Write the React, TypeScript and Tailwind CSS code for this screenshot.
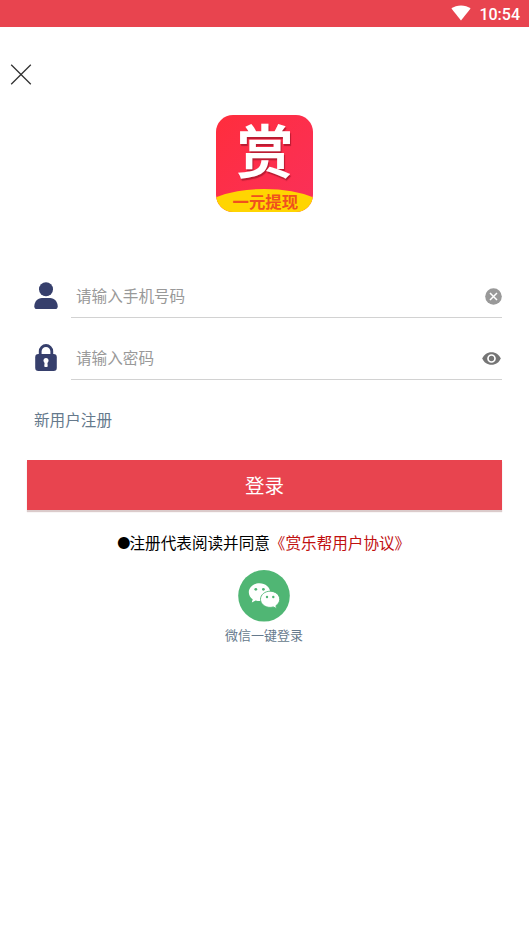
import { useState } from 'react'

function StatusBar() {
  return (
    <div className="flex h-[27px] items-center justify-end bg-[#E8444F] pr-[9px] text-white">
      <svg width="20" height="16" viewBox="0 0 20 16" className="-mt-[2px] mr-[8px]" fill="currentColor">
        <path d="M10 15.500 0.400 3.600C3 1.500 6.300.4 10 .4s7 1.100 9.600 3.200z" />
      </svg>
      <span className="mt-[2px] font-['Roboto',sans-serif] text-[16px] font-medium leading-[20px]">10:54</span>
    </div>
  )
}

function AppLogo() {
  return (
    <div className="relative mx-auto h-[97px] w-[97px]">
      <div className="h-full overflow-hidden rounded-[17px] bg-gradient-to-br from-[#FF2D3C] to-[#FA3059]">
        <div className="-ml-[22px] mt-[74px] h-[60px] w-[141px] rounded-[50%] bg-[#FFD501]" />
      </div>
      <span className="absolute left-[21px] top-[8px] text-[57px] font-bold leading-[57px] text-white [text-shadow:1px_2px_1px_#b81c32] -translate-y-[3px]">赏</span>
      <span className="absolute left-[17px] top-[77px] whitespace-nowrap text-[16.4px] font-bold leading-[18px] text-[#F0501E]">一元提现</span>
    </div>
  )
}

function UserIcon() {
  return (
    <svg width="24" height="28" viewBox="0 0 24 28" fill="#363F6C">
      <circle cx="12" cy="7.200" r="7" />
      <path d="M.3 24.400C.3 19.800 3.400 16 8 16h8c4.600 0 7.700 3.800 7.700 8.400 0 1.700-1 2.600-2.600 2.600H2.900C1.300 27 .3 26.100.3 24.400z" />
    </svg>
  )
}

function LockIcon() {
  return (
    <svg width="24" height="28" viewBox="0 0 24 28">
      <path d="M6.200 12V7.300a5.800 5.800 0 0 1 11.600 0V12" fill="none" stroke="#363F6C" strokeWidth="2.800" />
      <rect x="1.200" y="10" width="21.600" height="17" rx="3.200" fill="#363F6C" />
      <circle cx="12" cy="16.500" r="2.500" fill="#fff" />
      <path d="M11.200 17h1.600l.4 5.500h-2.400z" fill="#fff" stroke="#fff" strokeLinejoin="round" />
    </svg>
  )
}

function ClearIcon() {
  return (
    <svg width="17" height="17" viewBox="0 0 17 17">
      <circle cx="8.500" cy="8.500" r="8.300" fill="#999" />
      <path d="M5 5l7 7M12 5l-7 7" stroke="#fff" strokeWidth="1.500" />
    </svg>
  )
}

function EyeIcon() {
  return (
    <svg width="19" height="13" viewBox="0 0 19 13">
      <path d="M9.500.2C5.200.2 1.700 2.700.3 6.500c1.400 3.800 4.900 6.300 9.200 6.300s7.800-2.500 9.200-6.300C17.300 2.700 13.800.2 9.500.2z" fill="#757575" />
      <circle cx="9.500" cy="6.500" r="3.500" fill="#757575" stroke="#fff" strokeWidth="1.700" />
    </svg>
  )
}

function WechatIcon() {
  return (
    <svg width="52" height="52" viewBox="0 0 52 52">
      <circle cx="26" cy="25.800" r="25.800" fill="#50B674" />
      <path d="M21.500 13.200c-6 0-10.700 4-10.700 9 0 2.900 1.500 5.400 3.900 7l-.9 3.300 3.900-2c1.200.4 2.500.6 3.800.6 6 0 10.700-4 10.700-8.900s-4.700-9-10.700-9z" fill="#fff" />
      <circle cx="17.800" cy="19.300" r="1.400" fill="#50B674" />
      <circle cx="25.400" cy="19.300" r="1.400" fill="#50B674" />
      <path d="M32.100 21.200c-5.300 0-9.600 3.600-9.600 8.100s4.300 8.100 9.600 8.100c1.100 0 2.200-.2 3.200-.5l3.400 1.700-.8-2.900c2.300-1.500 3.800-3.800 3.800-6.400 0-4.500-4.300-8.100-9.600-8.100z" fill="#fff" stroke="#50B674" strokeWidth=".9" />
      <circle cx="29" cy="27" r="1.200" fill="#50B674" />
      <circle cx="35.300" cy="27" r="1.200" fill="#50B674" />
    </svg>
  )
}

const inputClass =
  'h-[40px] min-w-0 flex-1 bg-transparent pb-[3px] pl-[5px] text-[15.6px] text-[#333] outline-none placeholder:text-[#999]'

export default function App() {
  const [phone, setPhone] = useState('')
  const [password, setPassword] = useState('')
  const [showPassword, setShowPassword] = useState(false)

  return (
    <div className="flex h-[941px] w-[529px] flex-col overflow-hidden bg-white font-['Noto_Sans_CJK_SC',sans-serif]">
      <StatusBar />

      <button type="button" aria-label="关闭" className="ml-[10px] mt-[37px] h-[21px] w-[22px]">
        <svg width="22" height="21" viewBox="0 0 22 21" stroke="#333" strokeWidth="1.300">
          <path d="M1.200.8l19.600 19.400M20.800.8L1.200 20.200" />
        </svg>
      </button>

      <div className="mt-[30px] pr-px">
        <AppLogo />
      </div>

      <div className="mt-[64px] flex h-[42px] pl-[34px] pr-[27px]">
        <div className="mr-[13px] pt-[6px]">
          <UserIcon />
        </div>
        <div className="flex flex-1 items-center border-b border-[#D2D2D2]">
          <input value={phone} onChange={e => setPhone(e.target.value)} placeholder="请输入手机号码" className={inputClass} />
          <button type="button" aria-label="清除" className="-mt-px" onClick={() => setPhone('')}>
            <ClearIcon />
          </button>
        </div>
      </div>

      <div className="mt-[20px] flex h-[42px] pl-[34px] pr-[27px]">
        <div className="mr-[13px] pt-[6px]">
          <LockIcon />
        </div>
        <div className="flex flex-1 items-center border-b border-[#D2D2D2]">
          <input
            type={showPassword ? 'text' : 'password'}
            value={password}
            onChange={e => setPassword(e.target.value)}
            placeholder="请输入密码"
            className={inputClass}
          />
          <button type="button" aria-label="显示密码" className="-mt-px mr-px" onClick={() => setShowPassword(prev => !prev)}>
            <EyeIcon />
          </button>
        </div>
      </div>

      <a href="#" className="ml-[34px] mt-[27px] self-start text-[15.6px] leading-[24px] text-[#65798C]">新用户注册</a>

      <button type="button" className="mx-[27px] mt-[29px] h-[50px] shrink-0 bg-[#E8444F] text-[19.5px] leading-[50px] text-white shadow-[0_2px_1px_rgba(90,20,20,0.22)]">
        登录
      </button>

      <p className="mt-[20px] flex items-center whitespace-nowrap pl-[117px] text-[15.6px] leading-[24px] text-black">
        <span className="w-[12.500px] font-['DejaVu_Sans',sans-serif]">●</span>
        <span>注册代表阅读并同意</span>
        <a href="#" className="text-[#C1100F]">《赏乐帮用户协议》</a>
      </p>

      <button type="button" className="ml-[225px] mt-[16px] flex w-[78px] flex-col items-center">
        <WechatIcon />
        <span className="mt-[3px] whitespace-nowrap text-[13px] leading-[20px] text-[#65798C]">微信一键登录</span>
      </button>
    </div>
  )
}
